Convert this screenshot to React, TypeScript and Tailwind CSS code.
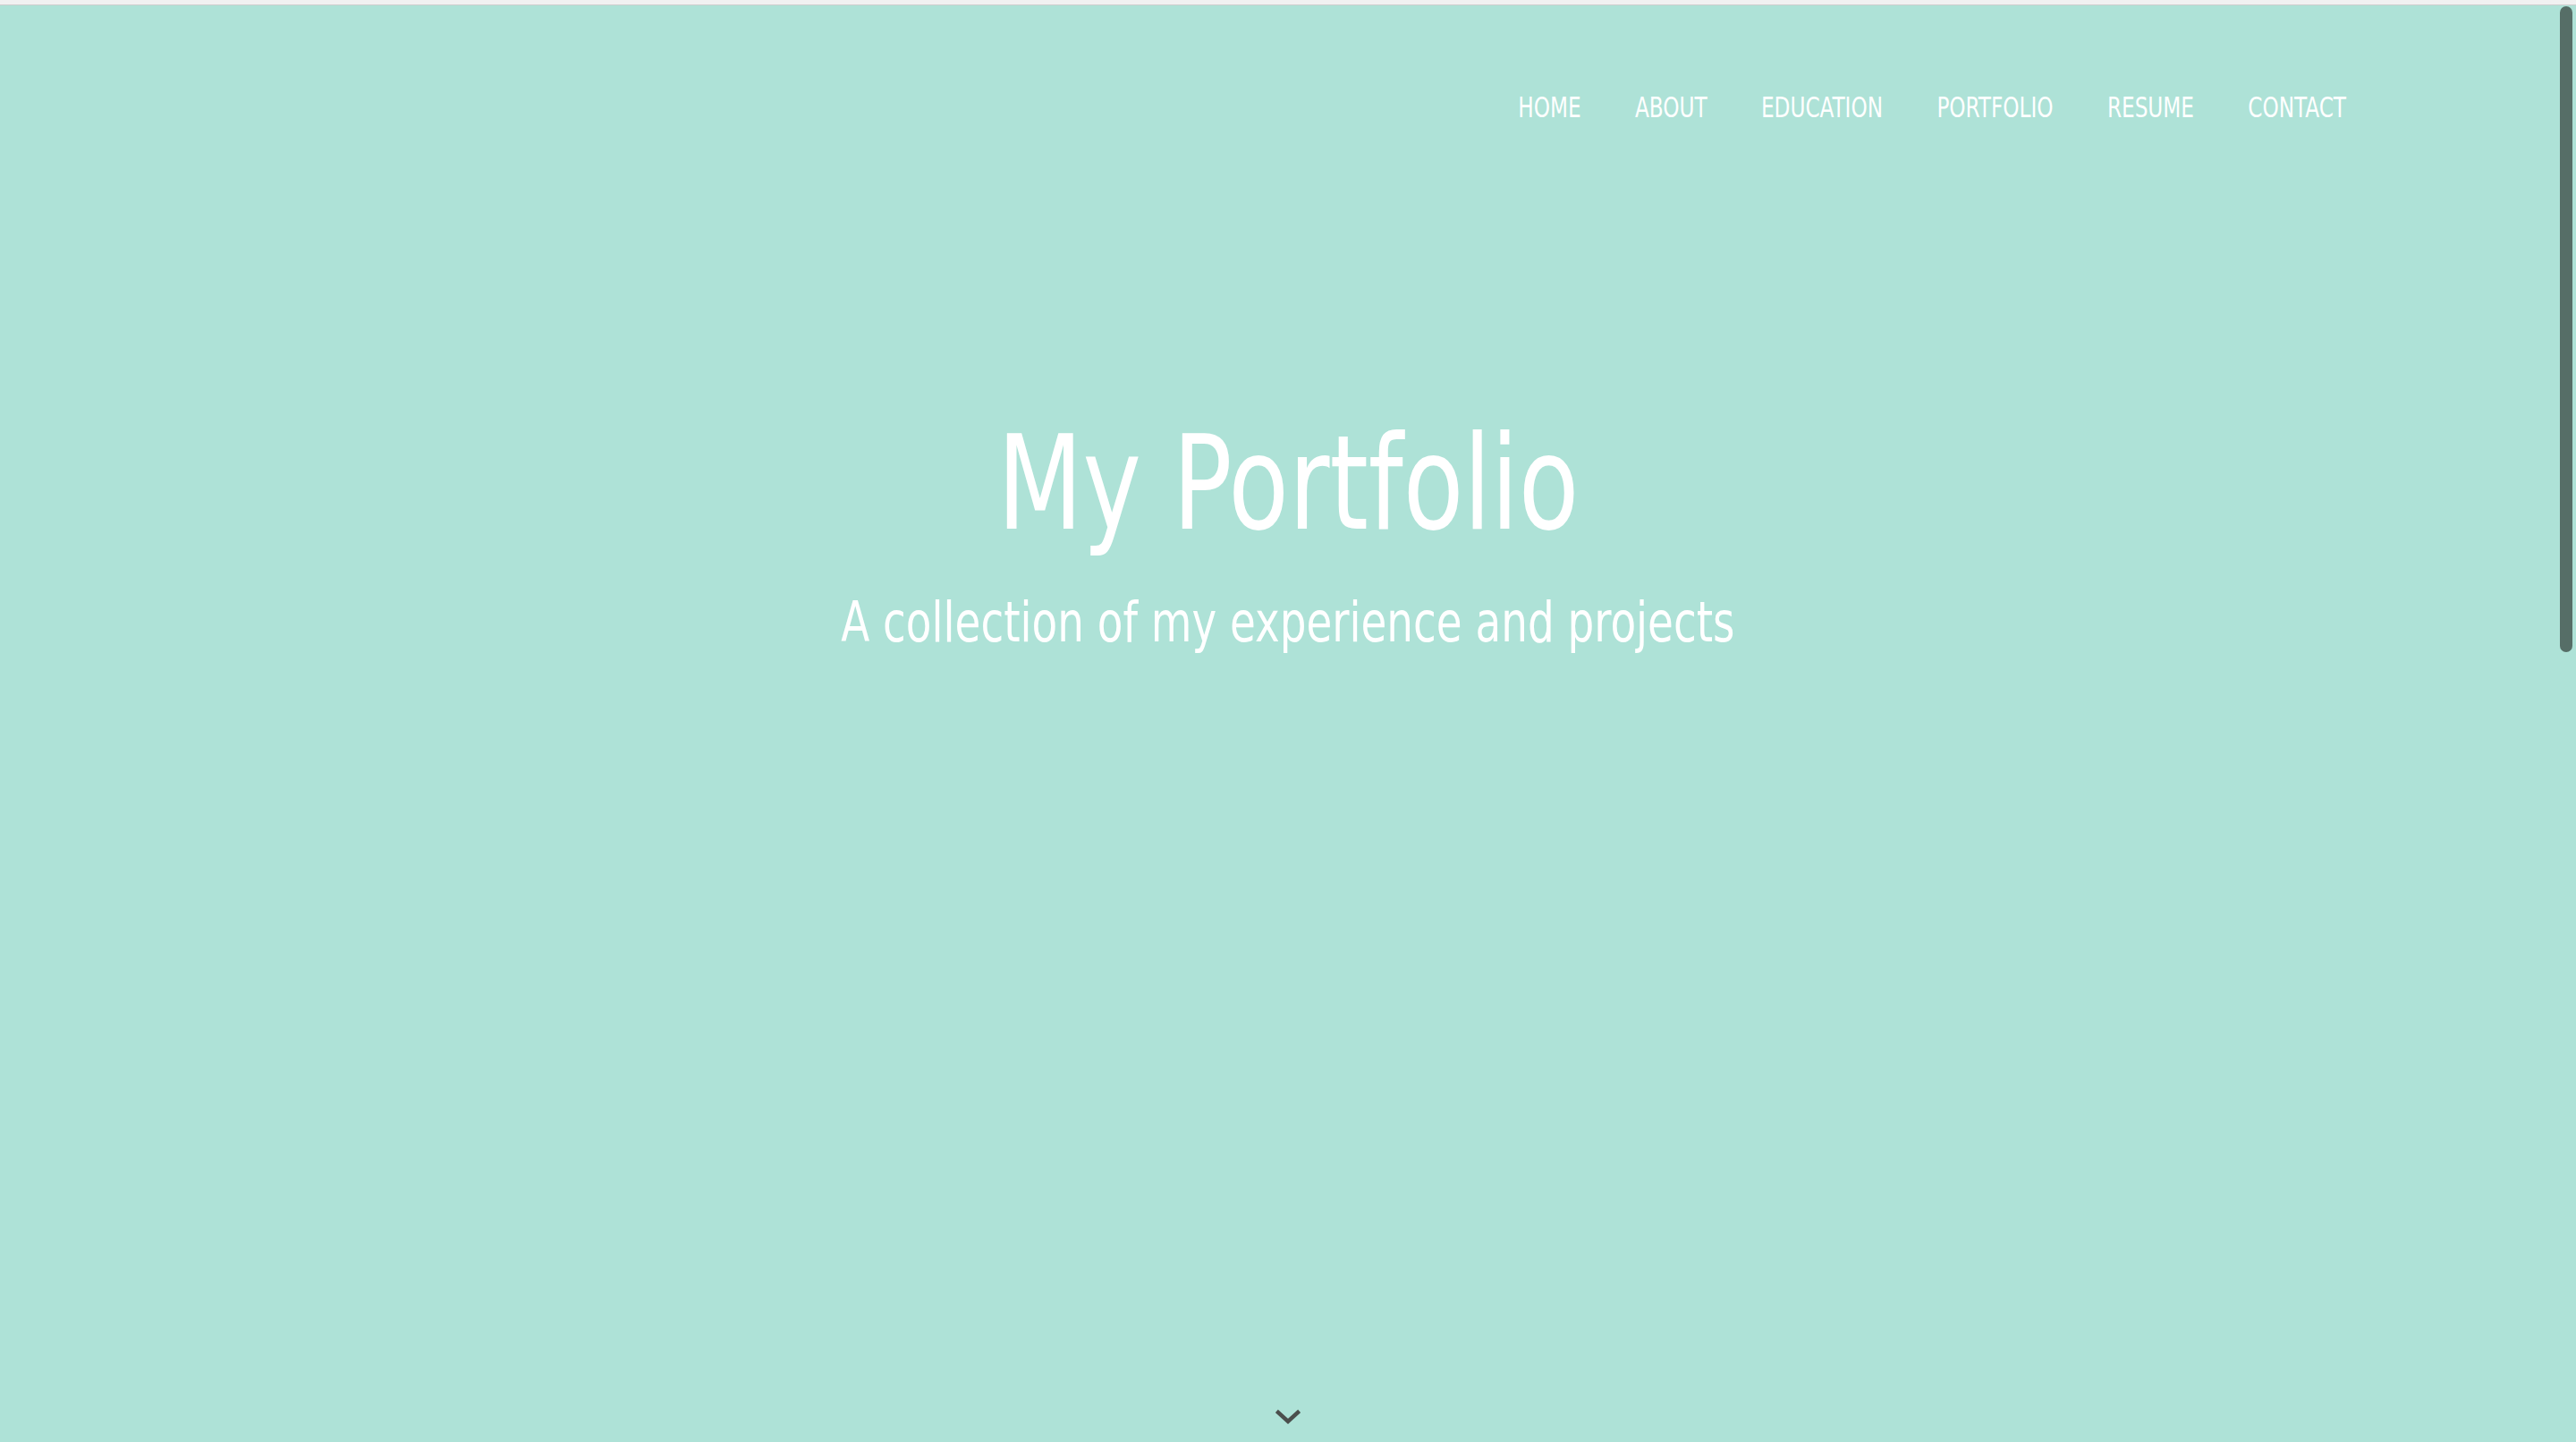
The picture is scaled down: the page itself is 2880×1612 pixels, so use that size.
const links = ['HOME', 'ABOUT', 'EDUCATION', 'PORTFOLIO', 'RESUME', 'CONTACT'];

const font = "font-['Liberation_Sans_Narrow','DejaVu_Sans_Condensed','Roboto',sans-serif] [font-stretch:condensed]";

export default function App() {
    return (
        <div className={`relative h-[1612px] w-full overflow-hidden bg-[#aee2d7] ${font}`}>
            <div className="h-[6px] bg-[#f1f1f1] border-b border-[#cdcdcd]" />
            <div className="flex h-[1606px] flex-col">
                <nav className="flex justify-end pr-[257px] pt-[94px]">
                    <ul className="flex origin-right scale-x-[0.805] gap-[75px]">
                        {links.map((l) => (
                            <li key={l}>
                                <a href={'#' + l.toLowerCase()} className="text-[32px] leading-[40px] text-white">
                                    {l}
                                </a>
                            </li>
                        ))}
                    </ul>
                </nav>
                <div className="flex flex-col items-center pt-[320px] text-white">
                    <h1 className="scale-x-[0.842] text-[146px] leading-[160px]">My Portfolio</h1>
                    <h2 className="mt-[38px] scale-x-[0.84] text-[62px] leading-[76px]">
                        A collection of my experience and projects
                    </h2>
                </div>
                <div className="mt-auto flex justify-center pb-[19px]">
                    <svg width="28" height="18" viewBox="0 0 28 18" fill="none">
                        <polyline points="3,4 14,14 25,4" stroke="#4b4f4d" strokeWidth="4.5" strokeLinecap="square" />
                    </svg>
                </div>
            </div>
            <div className="absolute right-[4px] top-[7px] h-[722px] w-[14px] rounded-full bg-[#566e67]" />
        </div>
    );
}
